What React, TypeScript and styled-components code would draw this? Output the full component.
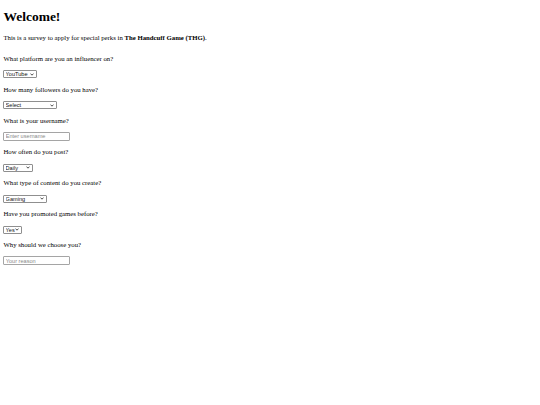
import React from 'react';
import styled, { createGlobalStyle } from 'styled-components';

const GlobalStyle = createGlobalStyle`
  html, body {
    margin: 0;
    padding: 0;
    background: #ffffff;
  }
`;

type Question = {
  label: string;
  kind: 'select' | 'text';
  options?: string[];
  placeholder?: string;
  width?: number;
};

const questions: Question[] = [
  { label: 'What platform are you an influencer on?', kind: 'select', options: ['YouTube', 'Twitch', 'TikTok', 'Instagram'], width: 33.5 },
  { label: 'How many followers do you have?', kind: 'select', options: ['Select', '0 - 1,000', '1,000 - 10,000', '10,000+'], width: 54 },
  { label: 'What is your username?', kind: 'text', placeholder: 'Enter username' },
  { label: 'How often do you post?', kind: 'select', options: ['Daily', 'Weekly', 'Monthly'], width: 29.5 },
  { label: 'What type of content do you create?', kind: 'select', options: ['Gaming', 'Vlogs', 'Reviews'], width: 44 },
  { label: 'Have you promoted games before?', kind: 'select', options: ['Yes', 'No'], width: 18.7 },
  { label: 'Why should we choose you?', kind: 'text', placeholder: 'Your reason' },
];

function Chevron() {
  return (
    <svg width="4" height="3" viewBox="0 0 8 6">
      <path d="M1 1.2 L4 4.4 L7 1.2" fill="none" stroke="#222" strokeWidth="1.6" />
    </svg>
  );
}

function App() {
  return (
    <Page>
      <GlobalStyle />
      <Title>Welcome!</Title>
      <Intro>
        This is a survey to apply for special perks in <b>The Handcuff Game (THG)</b>.
      </Intro>
      <Form onSubmit={(e) => e.preventDefault()}>
        {questions.map((q) => (
          <Field key={q.label}>
            <Label>{q.label}</Label>
            <ControlRow>
              {q.kind === 'select' ? (
                <SelectWrap>
                  <Select $width={q.width ?? 33} defaultValue={q.options?.[0]}>
                    {q.options?.map((o) => (
                      <option key={o}>{o}</option>
                    ))}
                  </Select>
                  <Arrow>
                    <Chevron />
                  </Arrow>
                </SelectWrap>
              ) : (
                <TextInput type="text" placeholder={q.placeholder} />
              )}
            </ControlRow>
          </Field>
        ))}
      </Form>
    </Page>
  );
}

const Page = styled.div`
  padding: 0 3.4px;
  font-family: 'Liberation Serif', 'Times New Roman', serif;
  font-size: 6.75px;
  color: #000000;
`;

const Title = styled.h1`
  font-size: 13.5px;
  font-weight: bold;
  margin: 9.05px 0;
`;

const Intro = styled.p`
  margin: 0 0 13.5px;
`;

const Form = styled.form`
  display: flex;
  flex-direction: column;
  gap: 6.6px;
  margin: 0;
`;

const Field = styled.div`
  display: flex;
  flex-direction: column;
  gap: 7.9px;
`;

const Label = styled.p`
  margin: 0;
`;

const ControlRow = styled.div`
  display: flex;
  align-items: center;
  height: 9.6px;
`;

const SelectWrap = styled.span`
  position: relative;
  display: inline-flex;
`;

const Select = styled.select<{ $width: number }>`
  appearance: none;
  -webkit-appearance: none;
  box-sizing: border-box;
  width: ${(p) => p.$width}px;
  height: 8px;
  margin: 0;
  padding: 0 0 0 1.2px;
  border: 1px solid #8f8f8f;
  border-radius: 1px;
  background: #ffffff;
  color: #111111;
  font-family: 'Liberation Sans', Arial, sans-serif;
  font-size: 5.6px;
  line-height: 6px;
  outline: none;
`;

const Arrow = styled.span`
  position: absolute;
  right: 3px;
  top: 2.6px;
  display: flex;
  pointer-events: none;
`;

const TextInput = styled.input`
  box-sizing: border-box;
  width: 66.7px;
  height: 9px;
  margin: 0;
  padding: 0 1.3px;
  border: 1px solid #a5a5a5;
  border-radius: 1px;
  font-family: 'Liberation Sans', Arial, sans-serif;
  font-size: 5.6px;
  color: #111111;
  outline: none;

  &::placeholder {
    color: #8a8a8a;
  }
`;

export default App;
